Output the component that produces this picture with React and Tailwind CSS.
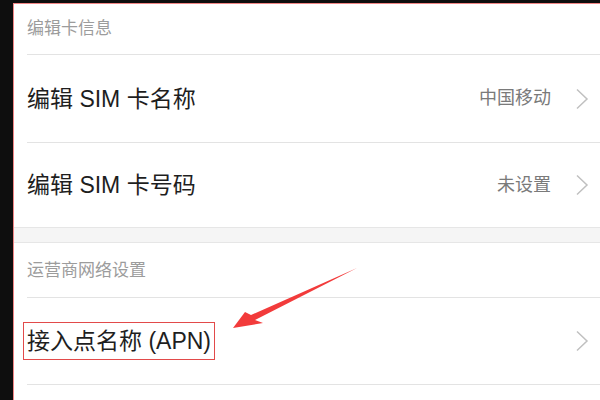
import React from 'react'

const font = { fontFamily: '"Liberation Sans", "Noto Sans CJK SC", sans-serif' }

function Chevron() {
  return (
    <svg width="14" height="22" viewBox="0 0 14 22" className="ml-[24px]">
      <path d="M2 1.5 L12 11 L2 20.5" fill="none" stroke="#c0c0c0" strokeWidth="1.5" />
    </svg>
  )
}

function Row({ height, title, value, children }) {
  return (
    <div className="pl-[13px]">
      <div
        className="flex items-center border-t border-[#e3e3e3] pr-[11px]"
        style={{ height }}
      >
        <div className="flex-1 text-[23px] leading-[26px] text-[#1e1e1e]">
          {children || title}
        </div>
        {value && <span className="text-[18px] text-[#7a7a7a]">{value}</span>}
        <Chevron />
      </div>
    </div>
  )
}

export default function App() {
  return (
    <div
      className="relative w-[600px] h-[400px] overflow-hidden bg-[#0e0e0e] pt-[3px] pl-[13px]"
      style={font}
    >
      <div className="h-full bg-white border-l border-t border-[#f08585] flex flex-col">
        {/* 编辑卡信息 */}
        <div className="h-[50px] pl-[13px] pt-[15px] text-[17px] leading-[20px] text-[#9c9c9c]">
          编辑卡信息
        </div>
        <Row height="88px" title="编辑 SIM 卡名称" value="中国移动" />
        <Row height="85px" title="编辑 SIM 卡号码" value="未设置" />

        <div className="h-[16px] bg-[#f5f5f5] border-y border-[#e6e6e6]" />

        {/* 运营商网络设置 */}
        <div className="h-[54px] pl-[13px] pt-[18px] text-[17px] leading-[20px] text-[#9c9c9c]">
          运营商网络设置
        </div>
        <Row height="87px">
          <span className="inline-flex items-center -ml-[4px] px-[3px] h-[38px] border border-[#e24a4a]">
            接入点名称 (APN)
          </span>
        </Row>
        <div className="pl-[13px]">
          <div className="border-t border-[#e3e3e3] h-[16px]" />
        </div>
      </div>

      {/* annotation arrow */}
      <svg
        className="absolute left-0 top-0 pointer-events-none"
        width="600"
        height="400"
        viewBox="0 0 600 400"
      >
        <polygon
          points="233,328 245,312 251,315 357,268 255,320 263,323"
          fill="#f23b3b"
        />
      </svg>
    </div>
  )
}
